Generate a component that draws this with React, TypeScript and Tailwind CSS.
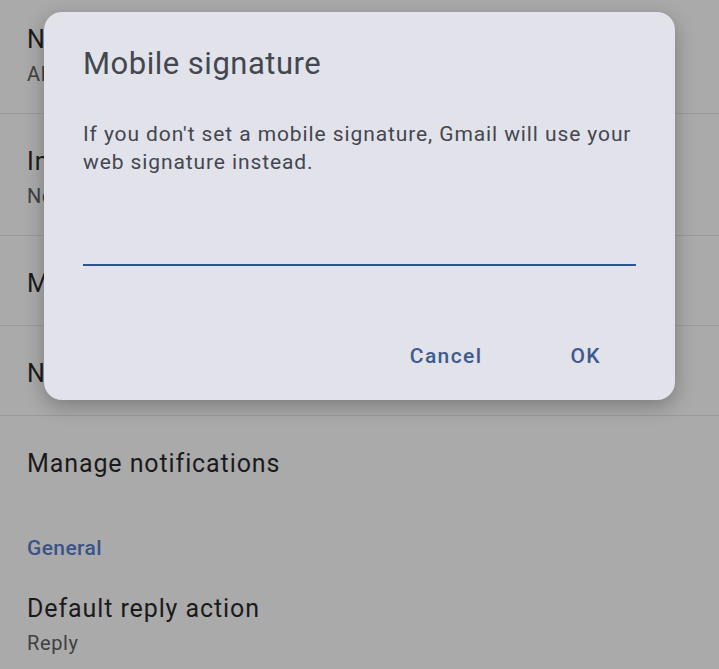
import React from "react";

type Row = { title: string; subtitle?: string };

const topRows: Row[] = [
  { title: "Notifications", subtitle: "All" },
  { title: "Inbox notifications", subtitle: "Notify for every message" },
  { title: "Mobile signature" },
  { title: "Notification sounds" },
];

function SettingRow({ title, subtitle, divider = true }: Row & { divider?: boolean }) {
  return (
    <div className={`px-[27px] pt-[32px] pb-[25px] ${divider ? "border-b border-[#9a9a9a]" : ""}`}>
      <div className="text-[25px] leading-[32px] tracking-[0.9px] text-[#1a1a1b]">{title}</div>
      {subtitle && (
        <div className="mt-[4px] text-[20px] leading-[28px] tracking-[0.6px] text-[#404043]">{subtitle}</div>
      )}
    </div>
  );
}

export default function App() {
  return (
    <div className="relative h-[669px] w-[719px] overflow-hidden bg-[#aaaaab] font-[Roboto,sans-serif]">
      {/* settings list under the scrim */}
      <div className="-mt-2">
        {topRows.map((r) => (
          <SettingRow key={r.title} {...r} />
        ))}
        <SettingRow title="Manage notifications" divider={false} />
        <div className="px-[27px] pt-[29px]">
          <div className="text-[21px] leading-[28px] font-medium tracking-[0.4px] text-[#3b5487]">General</div>
        </div>
        <div className="px-[27px] pt-[31px]">
          <div className="text-[25px] leading-[32px] tracking-[0.9px] text-[#1a1a1b]">Default reply action</div>
          <div className="mt-[4px] text-[20px] leading-[28px] tracking-[0.6px] text-[#404043]">Reply</div>
        </div>
      </div>

      {/* dialog */}
      <div className="absolute left-[44px] top-[12px] w-[631px] h-[388px] rounded-[18px] bg-[#e1e2ea] shadow-[0_6px_20px_rgba(0,0,0,0.28)] px-[39px] pt-[32px]">
        <h2 className="text-[31px] leading-[40px] tracking-[0.5px] text-[#43474f]">Mobile signature</h2>
        <p className="mt-[36px] text-[21px] leading-[28px] tracking-[0.9px] text-[#44474f]">
          If you don't set a mobile signature, Gmail will use your web signature instead.
        </p>
        <div className="mt-[88px] h-[2px] bg-[#2b5593]" />
        <div className="mt-[76px] flex justify-end gap-[88px] pr-[35px]">
          <button className="text-[21px] leading-[28px] font-medium tracking-[1.4px] text-[#3d5b90]">Cancel</button>
          <button className="text-[21px] leading-[28px] font-medium tracking-[1.4px] text-[#3d5b90]">OK</button>
        </div>
      </div>
    </div>
  );
}
